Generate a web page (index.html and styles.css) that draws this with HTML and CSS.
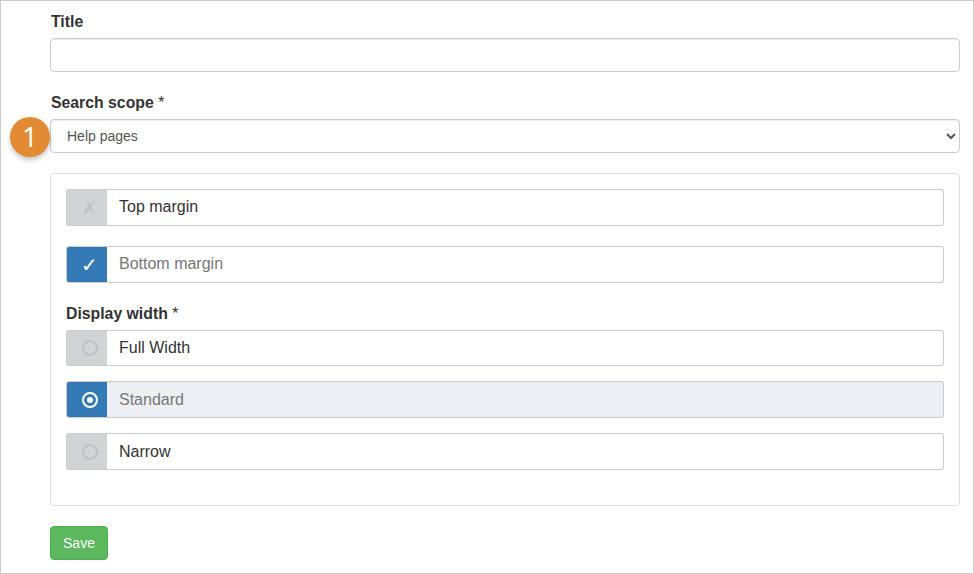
FILE: index.html
```html
<!DOCTYPE html>
<html lang="en">
<head>
<meta charset="utf-8">
<title>Search settings</title>
<link rel="stylesheet" href="styles.css">
</head>
<body>
<form class="frame">
  <label class="label label-title" for="title">Title</label>
  <input class="control" id="title" type="text">
  <label class="label label-scope" for="scope">Search scope <span class="req">*</span></label>
  <div class="scope-wrap">
    <span class="badge">1</span>
    <select class="control select" id="scope"><option>Help pages</option></select>
  </div>
  <div class="panel">
    <div class="row row-check">
      <span class="addon"><span class="cross">&#10007;</span></span>
      <span class="field">Top margin</span>
    </div>
    <div class="row row-check row-second">
      <span class="addon on"><span class="tick">&#10003;</span></span>
      <span class="field muted">Bottom margin</span>
    </div>
    <div class="label label-width">Display width <span class="req">*</span></div>
    <div class="row row-short">
      <span class="addon"><span class="radio"></span></span>
      <span class="field">Full Width</span>
    </div>
    <div class="row gap-a">
      <span class="addon on"><span class="radio selected"></span></span>
      <span class="field muted shaded">Standard</span>
    </div>
    <div class="row gap-a">
      <span class="addon"><span class="radio"></span></span>
      <span class="field">Narrow</span>
    </div>
  </div>
  <button class="save" type="button">Save</button>
</form>
</body>
</html>
```

FILE: styles.css
```css
* { box-sizing: border-box; }
html, body { margin: 0; padding: 0; background: #fff; }
body { font-family: "Liberation Sans", Arial, sans-serif; color: #333; }
.frame {
  width: 974px; height: 574px;
  border: 1px solid #ccc;
  padding: 0 13px 0 49px;
  display: flex; flex-direction: column; align-items: stretch;
  overflow: hidden;
}
.label { display: block; font-size: 15.8px; line-height: 20px; font-weight: 700; margin-left: 1px; color: #333; }
.req { font-weight: 400; }
.label-title { margin-top: 11px; margin-bottom: 6px; }
.label-scope { margin-top: 21px; margin-bottom: 6px; }
.control {
  display: block; width: 100%; height: 34px;
  border: 1px solid #ccc; border-radius: 4px;
  background: #fff; box-shadow: inset 0 1px 1px rgba(0,0,0,.075);
  font: 14px "Liberation Sans", Arial, sans-serif; color: #555;
  padding: 6px 12px;
}
.scope-wrap { position: relative; }
.badge {
  position: absolute; left: -40px; top: -2px;
  width: 40px; height: 40px; border-radius: 50%;
  background: #e38b32; color: #fff;
  font: 400 28px/39px "Open Sans", "Liberation Sans", sans-serif;
  text-align: center;
  box-shadow: 0 3px 5px rgba(0,0,0,.22);
  z-index: 1;
}
.panel {
  margin-top: 20px; height: 333px;
  border: 1px solid #ddd; border-radius: 4px;
  padding: 15px 15px 0;
}
.row { display: flex; height: 37px; font-size: 16px; line-height: 20px; }
.row-check .field { padding-bottom: 2px; }
.row-second { margin-top: 20px; }
.row-short { height: 36px; }
.gap-a { margin-top: 15px; }
.label-width { margin: 21px 0 6px; height: 20px; }
.addon {
  width: 41px; flex: none;
  display: flex; align-items: center; justify-content: center;
  padding-left: 5px;
  background: #d1d3d4; border: 1px solid #ccc; border-right: 0;
  border-radius: 3px 0 0 3px;
}
.addon.on { background: #337ab7; color: #fff; }
.cross { color: #c0c2c3; font-size: 18px; font-weight: 700; font-family: "DejaVu Sans", sans-serif; }
.tick { color: #fff; font-size: 20px; font-weight: 700; line-height: 20px; font-family: "DejaVu Sans", sans-serif; }
.radio { width: 16px; height: 16px; border-radius: 50%; border: 2px solid #bfc1c2; }
.radio.selected { border-color: #fff; display: flex; align-items: center; justify-content: center; }
.radio.selected::after { content: ""; width: 6px; height: 6px; border-radius: 50%; background: #fff; }
.field {
  flex: 1; display: flex; align-items: center;
  padding-left: 12px;
  border: 1px solid #ccc; border-left: 0; border-radius: 0 3px 3px 0;
  background: #fff; color: #333;
}
.muted { color: #777; }
.shaded { background: #eeeff4; }
.save {
  margin-top: 20px; align-self: flex-start;
  width: 58px; height: 34px;
  background: #5cb85c; border: 1px solid #4cae4c; border-radius: 4px;
  color: #fff; font: 14px "Liberation Sans", Arial, sans-serif; padding: 0;
}
```
